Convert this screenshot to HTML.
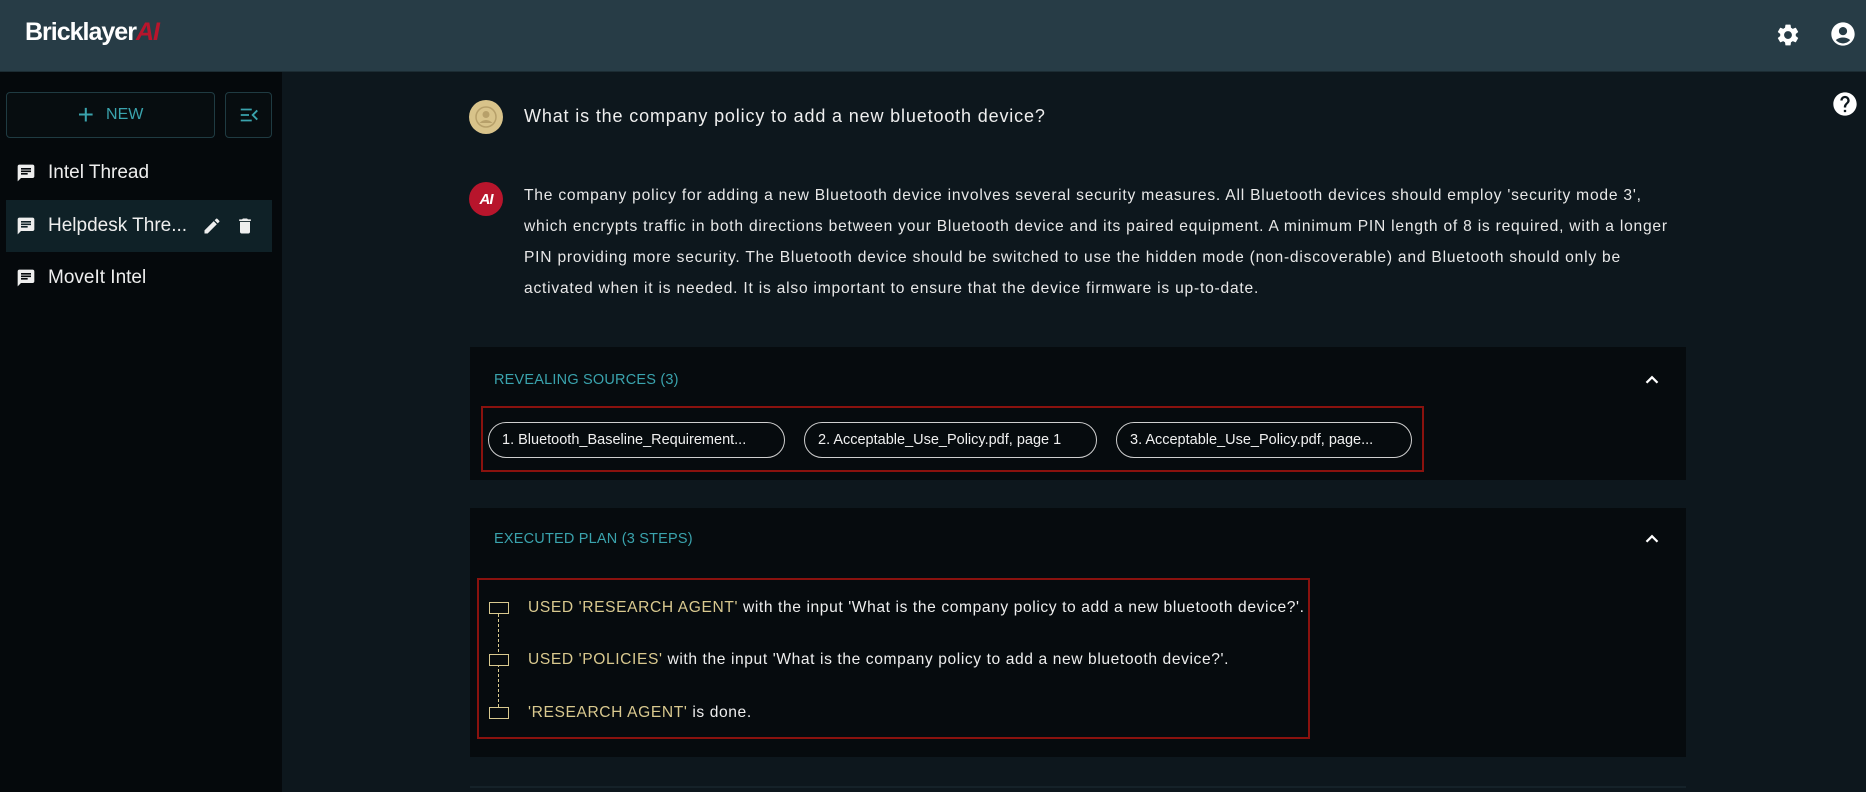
<!DOCTYPE html>
<html><head><meta charset="utf-8"><style>
*{margin:0;padding:0;box-sizing:border-box}
body{width:1866px;height:792px;overflow:hidden;background:#0d171d;font-family:"Liberation Sans",sans-serif;color:#e6e6e6;position:relative}
.abs{position:absolute}
.hdr{left:0;top:0;width:1866px;height:72px;background:#273c46;border-bottom:1px solid #1c2c33}
.side{left:0;top:72px;width:282px;height:720px;background:#05090c}
.btn{border:1.5px solid #1f3b42;border-radius:4px;background:#070d10}
.th{left:16px;font-size:19px;color:#eee;display:flex;align-items:center;gap:12px}
.panel{left:470px;width:1216px;background:#060b0e}
.ttl{font-size:14.5px;color:#3aa3ad;letter-spacing:.2px}
.red{border:2.5px solid #8a120e}
.pill{border:1.5px solid #cfcfcf;border-radius:18px;height:36px;top:422px;font-size:14.5px;color:#f0f0f0;display:flex;align-items:center;padding-left:13px;white-space:nowrap;overflow:hidden}
.ans{left:524px;top:180px;font-size:15.6px;line-height:31px;color:#e8e8e8;white-space:nowrap;letter-spacing:.78px}
.step{left:528px;font-size:15.6px;color:#eee;letter-spacing:.6px;white-space:nowrap}
.step b{font-weight:normal;color:#d9c98f}
.ico{left:489px;width:20px;height:12px;border:1.5px solid #d9c98f}
</style></head><body>
<div class="abs hdr"></div>
<div class="abs" style="left:25px;top:18px;font-size:25px;font-weight:bold;color:#fff;letter-spacing:-1px">Bricklayer<span style="color:#b8152c;font-style:italic">AI</span></div>
<svg class="abs" style="left:1775px;top:22px" width="26" height="26" viewBox="0 0 24 24"><path fill="#fff" d="M19.14 12.940c.04-.3.06-.61.06-.94 0-.32-.02-.64-.07-.94l2.030-1.580a.49.49 0 0 0 .12-.61l-1.920-3.320a.488.488 0 0 0-.59-.22l-2.390.96c-.5-.38-1.030-.7-1.620-.94l-.36-2.540a.484.484 0 0 0-.48-.41h-3.840c-.24 0-.43.17-.47.41l-.36 2.540c-.59.24-1.130.57-1.620.94l-2.390-.96c-.22-.08-.47 0-.59.22L2.740 8.870c-.12.21-.08.47.12.61l2.030 1.580c-.05.3-.09.63-.09.94s.02.64.07.94l-2.030 1.580a.49.49 0 0 0-.12.61l1.920 3.320c.12.22.37.29.59.22l2.390-.96c.5.38 1.030.7 1.620.94l.36 2.540c.05.24.24.41.48.41h3.840c.24 0 .44-.17.47-.41l.36-2.540c.59-.24 1.130-.56 1.620-.94l2.390.96c.22.08.47 0 .59-.22l1.920-3.320c.12-.22.07-.47-.12-.61l-2.010-1.580zM12 15.600c-1.980 0-3.600-1.620-3.600-3.600s1.620-3.600 3.600-3.600 3.600 1.620 3.600 3.600-1.620 3.600-3.600 3.600z"/></svg>
<svg class="abs" style="left:1829px;top:20px" width="28" height="28" viewBox="0 0 24 24"><path fill="#fff" d="M12 2C6.48 2 2 6.48 2 12s4.48 10 10 10 10-4.48 10-10S17.52 2 12 2zm0 4c1.93 0 3.5 1.57 3.5 3.5S13.93 13 12 13s-3.5-1.57-3.5-3.5S10.07 6 12 6zm0 14c-2.03 0-4.43-.82-6.14-2.88a9.947 9.947 0 0 1 12.28 0C16.43 19.18 14.03 20 12 20z"/></svg>
<svg class="abs" style="left:1831px;top:90px" width="28" height="28" viewBox="0 0 24 24"><path fill="#fff" d="M12 2C6.48 2 2 6.48 2 12s4.48 10 10 10 10-4.48 10-10S17.52 2 12 2zm1 17h-2v-2h2v2zm2.07-7.75l-.9.92C13.45 12.9 13 13.5 13 15h-2v-.5c0-1.1.45-2.1 1.17-2.830l1.24-1.26c.37-.36.59-.86.59-1.41 0-1.1-.9-2-2-2s-2 .9-2 2H8c0-2.21 1.79-4 4-4s4 1.79 4 4c0 .88-.36 1.68-.93 2.25z"/></svg>
<div class="abs side"></div>
<div class="abs btn" style="left:6px;top:92px;width:209px;height:46px;display:flex;align-items:center;justify-content:center;gap:12px;color:#3aa3ad;font-size:16px"><span style="font-size:28px;font-weight:300;line-height:1">+</span>NEW</div>
<div class="abs btn" style="left:225px;top:92px;width:47px;height:46px"></div>
<svg class="abs" style="left:238px;top:104px" width="22" height="22" viewBox="0 0 24 24"><path fill="none" stroke="#3aa3ad" stroke-width="2" d="M3 6h12M3 12h9M3 18h12M21 7l-5 5 5 5"/></svg>
<div class="abs" style="left:6px;top:200px;width:266px;height:52px;background:#0f2127"></div>
<svg width="0" height="0" style="position:absolute"><defs><symbol id="ch" viewBox="0 0 24 24"><path fill="#eee" d="M20 2H4c-1.1 0-2 .9-2 2v18l4-4h14c1.1 0 2-.9 2-2V4c0-1.1-.9-2-2-2zM6 9h12v2H6zm8 5H6v-2h8zm4-6H6V6h12z"/></symbol></defs></svg>
<div class="abs th" style="top:162px"><svg width="20" height="20"><use href="#ch"/></svg>Intel Thread</div>
<div class="abs th" style="top:215px"><svg width="20" height="20"><use href="#ch"/></svg>Helpdesk Thre...</div>
<svg class="abs" style="left:202px;top:216px" width="20" height="20" viewBox="0 0 24 24"><path fill="#eee" d="M3 17.25V21h3.75L17.81 9.94l-3.75-3.75L3 17.25zM20.71 7.04a1 1 0 0 0 0-1.41l-2.34-2.34a1 1 0 0 0-1.41 0l-1.83 1.830 3.75 3.75 1.83-1.83z"/></svg>
<svg class="abs" style="left:235px;top:216px" width="20" height="20" viewBox="0 0 24 24"><path fill="#eee" d="M6 19c0 1.1.9 2 2 2h8c1.1 0 2-.9 2-2V7H6v12zM19 4h-3.5l-1-1h-5l-1 1H5v2h14V4z"/></svg>
<div class="abs th" style="top:267px"><svg width="20" height="20"><use href="#ch"/></svg>MoveIt Intel</div>
<div class="abs" style="left:469px;top:100px;width:34px;height:34px;border-radius:50%;background:#d8c38a;display:flex;align-items:center;justify-content:center"><svg width="24" height="24" viewBox="0 0 24 24"><circle cx="12" cy="12" r="10" fill="none" stroke="#b7a06a" stroke-width="1.5"/><circle cx="12" cy="9.5" r="3.5" fill="#b7a06a"/><path d="M5.5 18c3.5-4 9.5-4 13 0" fill="#b7a06a"/></svg></div>
<div class="abs" style="left:524px;top:106px;font-size:18px;color:#eee;letter-spacing:.85px">What is the company policy to add a new bluetooth device?</div>
<div class="abs" style="left:469px;top:182px;width:34px;height:34px;border-radius:50%;background:#b8152c;color:#fff;font-weight:bold;font-style:italic;font-size:15px;display:flex;align-items:center;justify-content:center;letter-spacing:-1px">AI</div>
<div class="abs ans">The company policy for adding a new Bluetooth device involves several security measures. All Bluetooth devices should employ 'security mode 3',<br>which encrypts traffic in both directions between your Bluetooth device and its paired equipment. A minimum PIN length of 8 is required, with a longer<br>PIN providing more security. The Bluetooth device should be switched to use the hidden mode (non-discoverable) and Bluetooth should only be<br>activated when it is needed. It is also important to ensure that the device firmware is up-to-date.</div>
<div class="abs panel" style="top:347px;height:133px"></div>
<div class="abs ttl" style="left:494px;top:372px">REVEALING SOURCES (3)</div>
<svg class="abs" style="left:1641px;top:369px" width="22" height="22" viewBox="0 0 24 24"><path fill="none" stroke="#fff" stroke-width="2.5" d="M6 15l6-6 6 6"/></svg>
<div class="abs red" style="left:481px;top:406px;width:943px;height:66px"></div>
<div class="abs pill" style="left:488px;width:297px">1. Bluetooth_Baseline_Requirement...</div>
<div class="abs pill" style="left:804px;width:293px">2. Acceptable_Use_Policy.pdf, page 1</div>
<div class="abs pill" style="left:1116px;width:296px">3. Acceptable_Use_Policy.pdf, page...</div>
<div class="abs panel" style="top:508px;height:249px"></div>
<div class="abs ttl" style="left:494px;top:531px">EXECUTED PLAN (3 STEPS)</div>
<svg class="abs" style="left:1641px;top:528px" width="22" height="22" viewBox="0 0 24 24"><path fill="none" stroke="#fff" stroke-width="2.5" d="M6 15l6-6 6 6"/></svg>
<div class="abs red" style="left:477px;top:578px;width:833px;height:161px"></div>
<div class="abs" style="left:498px;top:614px;height:98px;border-left:1.5px dashed #d9c98f"></div>
<div class="abs ico" style="left:489px;top:602px;background:#060b0e"></div>
<div class="abs ico" style="left:489px;top:654px;background:#060b0e"></div>
<div class="abs ico" style="left:489px;top:707px;background:#060b0e"></div>
<div class="abs step" style="top:599px"><b>USED 'RESEARCH AGENT'</b> with the input 'What is the company policy to add a new bluetooth device?'.</div>
<div class="abs step" style="top:651px"><b>USED 'POLICIES'</b> with the input 'What is the company policy to add a new bluetooth device?'.</div>
<div class="abs step" style="top:704px"><b>'RESEARCH AGENT'</b> is done.</div>
<div class="abs" style="left:470px;top:786px;width:1216px;height:2px;background:#152229"></div>
</body></html>
